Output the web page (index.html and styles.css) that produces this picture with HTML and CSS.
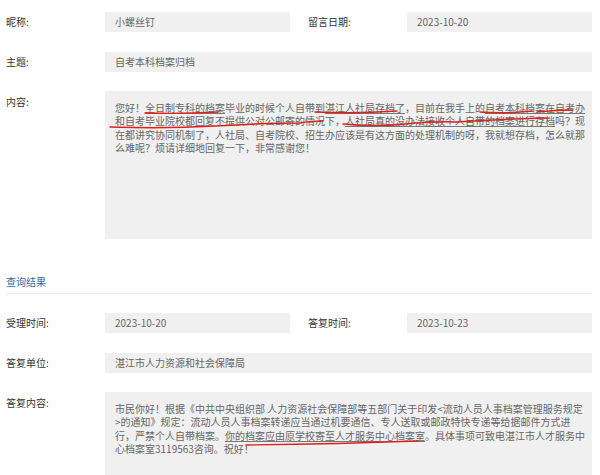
FILE: index.html
```html
<!DOCTYPE html>
<html lang="zh-CN">
<head>
<meta charset="utf-8">
<title>留言详情</title>
<link rel="stylesheet" href="styles.css">
</head>
<body>
<div class="page">
  <div class="row">
    <div class="label">昵称:</div>
    <div class="field half">小螺丝钉</div>
    <div class="label label2">留言日期:</div>
    <div class="field half">2023-10-20</div>
  </div>
  <div class="row">
    <div class="label">主题:</div>
    <div class="field full">自考本科档案归档</div>
  </div>
  <div class="row">
    <div class="label">内容:</div>
    <div class="box content">
      <p class="text">您好！<span class="ul">全日制专科的档案</span>毕业的时候个人自带到<span class="ul">湛江人社局存档了</span>，目前在我手上的<span class="ul">自考本科档案</span><span class="ul">在自考办</span>和自考毕业院校都回复不提供公对公邮寄的情况下，<span class="ul">人社局真的没办法接收个人自带的档案进行存档</span>吗？现在都讲究协同机制了，人社局、自考院校、招生办应该是有这方面的处理机制的呀，我就想存档，怎么就那么难呢？烦请详细地回复一下，非常感谢您！</p>
      <svg class="marks" width="487" height="148" viewBox="0 0 487 148" aria-hidden="true">
        <g fill="none" stroke="#e0201b" stroke-width="1.4" stroke-linecap="round">
          <path d="M40 22 Q76 23 113 21"/>
          <path d="M210 21 Q250 23 292 20"/>
          <path d="M375 21 Q400 23 427 20"/>
          <path d="M432 21 Q450 19 468 19"/>
          <path d="M5 36 Q60 38 110 35 T195 32 Q205 30 218 30"/>
          <path d="M238 33 Q270 36 300 33 T350 31 Q400 28 443 27"/>
        </g>
      </svg>
    </div>
  </div>

  <div class="section">查询结果</div>

  <div class="row">
    <div class="label">受理时间:</div>
    <div class="field half">2023-10-20</div>
    <div class="label label2">答复时间:</div>
    <div class="field half">2023-10-23</div>
  </div>
  <div class="row">
    <div class="label">答复单位:</div>
    <div class="field full">湛江市人力资源和社会保障局</div>
  </div>
  <div class="row">
    <div class="label">答复内容:</div>
    <div class="box reply">
      <p class="text">市民你好！根据《中共中央组织部 人力资源社会保障部等五部门关于印发&lt;流动人员人事档案管理服务规定&gt;的通知》规定：流动人员人事档案转递应当通过机要通信、专人送取或邮政特快专递等给据邮件方式进行，严禁个人自带档案。<span class="ul">你的档案应由原学校寄至人才服务中心档案室</span>。具体事项可致电湛江市人才服务中心档案室3119563咨询。祝好！</p>
      <svg class="marks" width="487" height="100" viewBox="0 0 487 100" aria-hidden="true">
        <g fill="none" stroke="#e0201b" stroke-width="1.4" stroke-linecap="round">
          <path d="M141 53 Q230 52 313 49"/>
        </g>
      </svg>
    </div>
  </div>
</div>
</body>
</html>
```

FILE: styles.css
```css
* { box-sizing: border-box; }
html, body { margin: 0; padding: 0; background: #fff; }
body {
  font-family: "Noto Sans CJK SC", "Liberation Sans", sans-serif;
  font-size: 10px;
  color: #333;
  overflow: hidden;
}
.page {
  width: 600px;
  height: 475px;
  overflow: hidden;
  padding: 12px 8px 0 6px;
}
.row {
  display: flex;
  align-items: flex-start;
  margin-bottom: 20px;
}
.label {
  width: 99px;
  height: 20px;
  line-height: 20px;
  color: #333;
  flex: none;
}
.label2 {
  width: 117px;
  padding-left: 18px;
}
.field {
  height: 20px;
  line-height: 20px;
  background: #f0f0f0;
  color: #666;
  padding: 0 10px;
  white-space: nowrap;
  flex: none;
}
.half { width: 185px; }
.full { width: 487px; }
.box {
  position: relative;
  width: 487px;
  background: #f0f0f0;
  padding: 10px 7px 10px 10px;
  flex: none;
  margin-top: -1px;
}
.content { height: 148px; }
.reply { height: 100px; }
.text {
  margin: 0;
  color: #666;
  line-height: 13.4px;
  word-break: break-all;
}
.ul {
  text-decoration: underline;
  text-decoration-color: #777;
  text-underline-offset: 1px;
}
.marks {
  position: absolute;
  left: 0;
  top: 0;
  pointer-events: none;
}
.section {
  margin-top: 35px;
  color: #2e6aa6;
  height: 20px;
  line-height: 16px;
  border-bottom: 1px solid #ececec;
  margin-bottom: 19px;
}
```
